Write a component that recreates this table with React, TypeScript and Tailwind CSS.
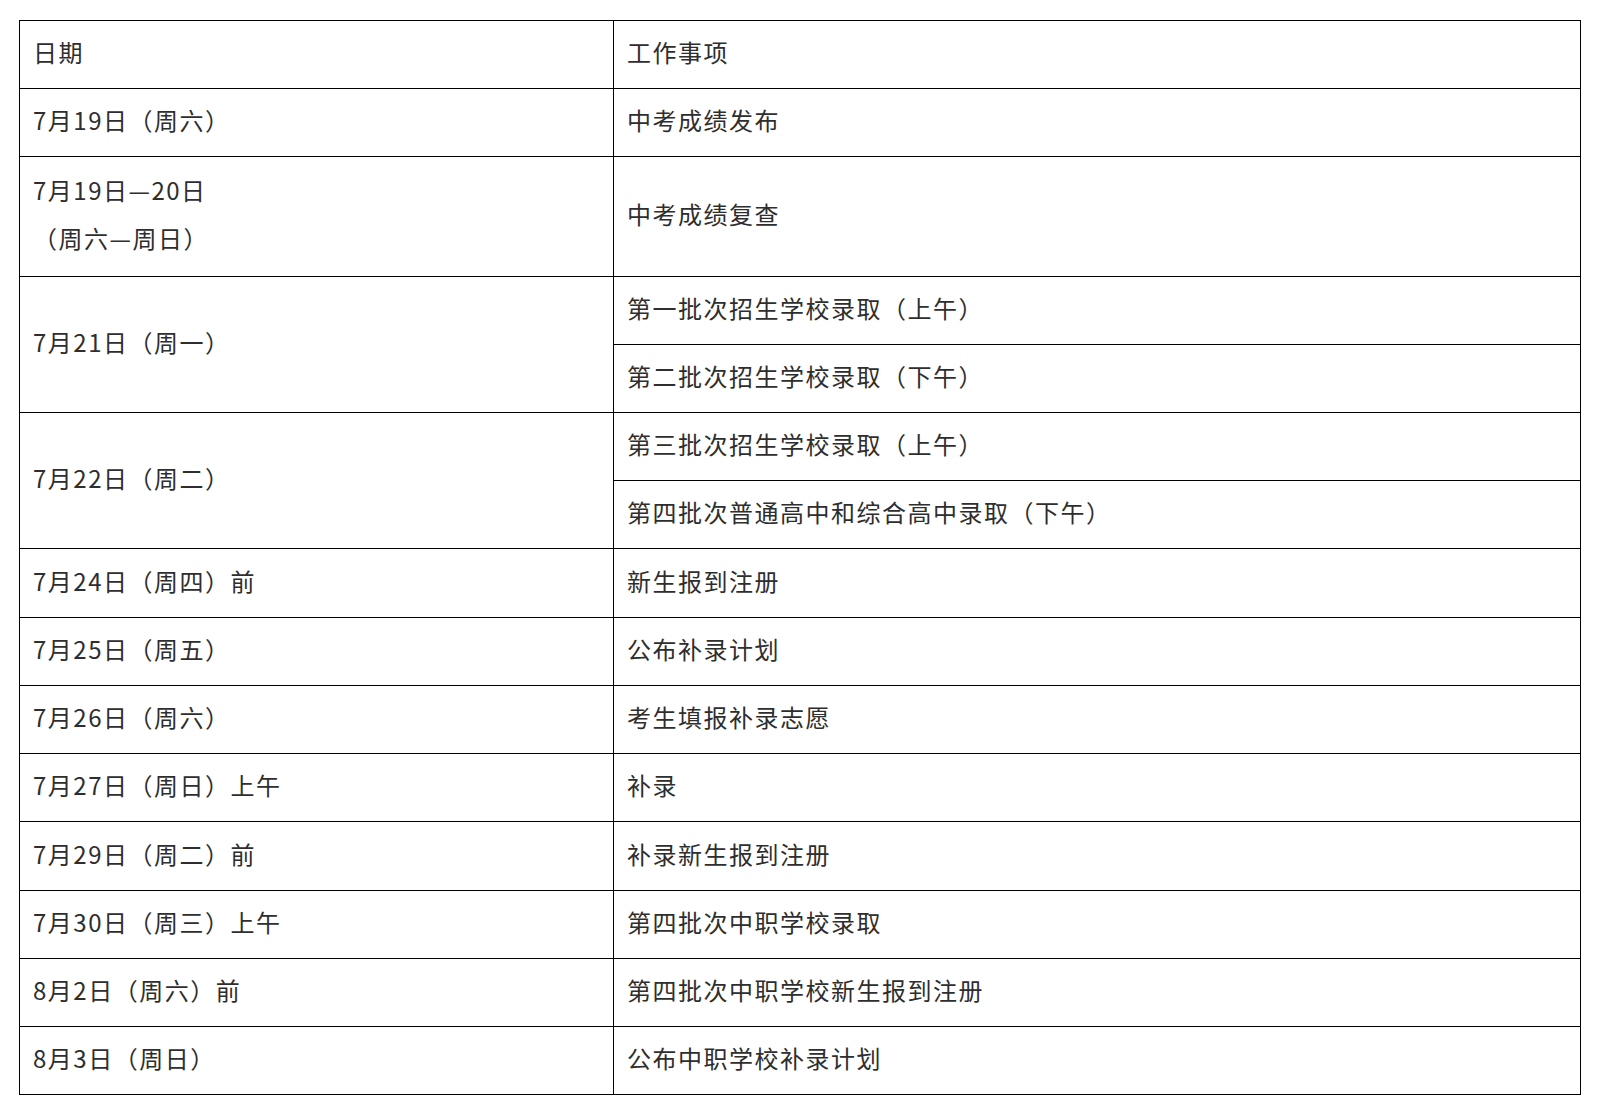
import React from 'react';

type Row = {
  date: React.ReactNode;
  tasks: string[];
  tall?: boolean;
};

const rows: Row[] = [
  { date: '7月19日（周六）', tasks: ['中考成绩发布'] },
  {
    date: (
      <>
        <span className="block">7月19日—20日</span>
        <span className="block">（周六—周日）</span>
      </>
    ),
    tasks: ['中考成绩复查'],
    tall: true,
  },
  { date: '7月21日（周一）', tasks: ['第一批次招生学校录取（上午）', '第二批次招生学校录取（下午）'] },
  { date: '7月22日（周二）', tasks: ['第三批次招生学校录取（上午）', '第四批次普通高中和综合高中录取（下午）'] },
  { date: '7月24日（周四）前', tasks: ['新生报到注册'] },
  { date: '7月25日（周五）', tasks: ['公布补录计划'] },
  { date: '7月26日（周六）', tasks: ['考生填报补录志愿'] },
  { date: '7月27日（周日）上午', tasks: ['补录'] },
  { date: '7月29日（周二）前', tasks: ['补录新生报到注册'] },
  { date: '7月30日（周三）上午', tasks: ['第四批次中职学校录取'] },
  { date: '8月2日（周六）前', tasks: ['第四批次中职学校新生报到注册'] },
  { date: '8月3日（周日）', tasks: ['公布中职学校补录计划'] },
];

const cell = 'border border-black align-middle px-[13px] pt-0 pb-[5px]';

// rows that come out a pixel taller in the source
const rowHeight = (i: number, tall?: boolean) =>
  tall ? 'h-[120px]' : i === 4 || i === 8 ? 'h-[69px]' : 'h-[68px]';

export default function App() {
  return (
    <div
      className="min-h-[1120px] w-[1608px] bg-white pt-[20px] pl-[19px] text-[24px] tracking-[1.5px] text-[#2e2e2e]"
      style={{ fontFamily: '"Noto Sans CJK SC", "Noto Sans", sans-serif' }}
    >
      <table className="w-[1562px] table-fixed border-collapse">
        <colgroup>
          <col className="w-[594px]" />
          <col />
        </colgroup>
        <tbody>
          <tr className="h-[68px]">
            <td className={cell}>日期</td>
            <td className={cell}>工作事项</td>
          </tr>
          {rows.map((row, i) =>
            row.tasks.map((task, j) => (
              <tr key={`${i}-${j}`} className={rowHeight(i, row.tall)}>
                {j === 0 && (
                  <td
                    className={`${cell} ${row.tall ? 'leading-[48px]' : ''}`}
                    rowSpan={row.tasks.length}
                  >
                    {row.date}
                  </td>
                )}
                <td className={cell}>{task}</td>
              </tr>
            ))
          )}
        </tbody>
      </table>
    </div>
  );
}
